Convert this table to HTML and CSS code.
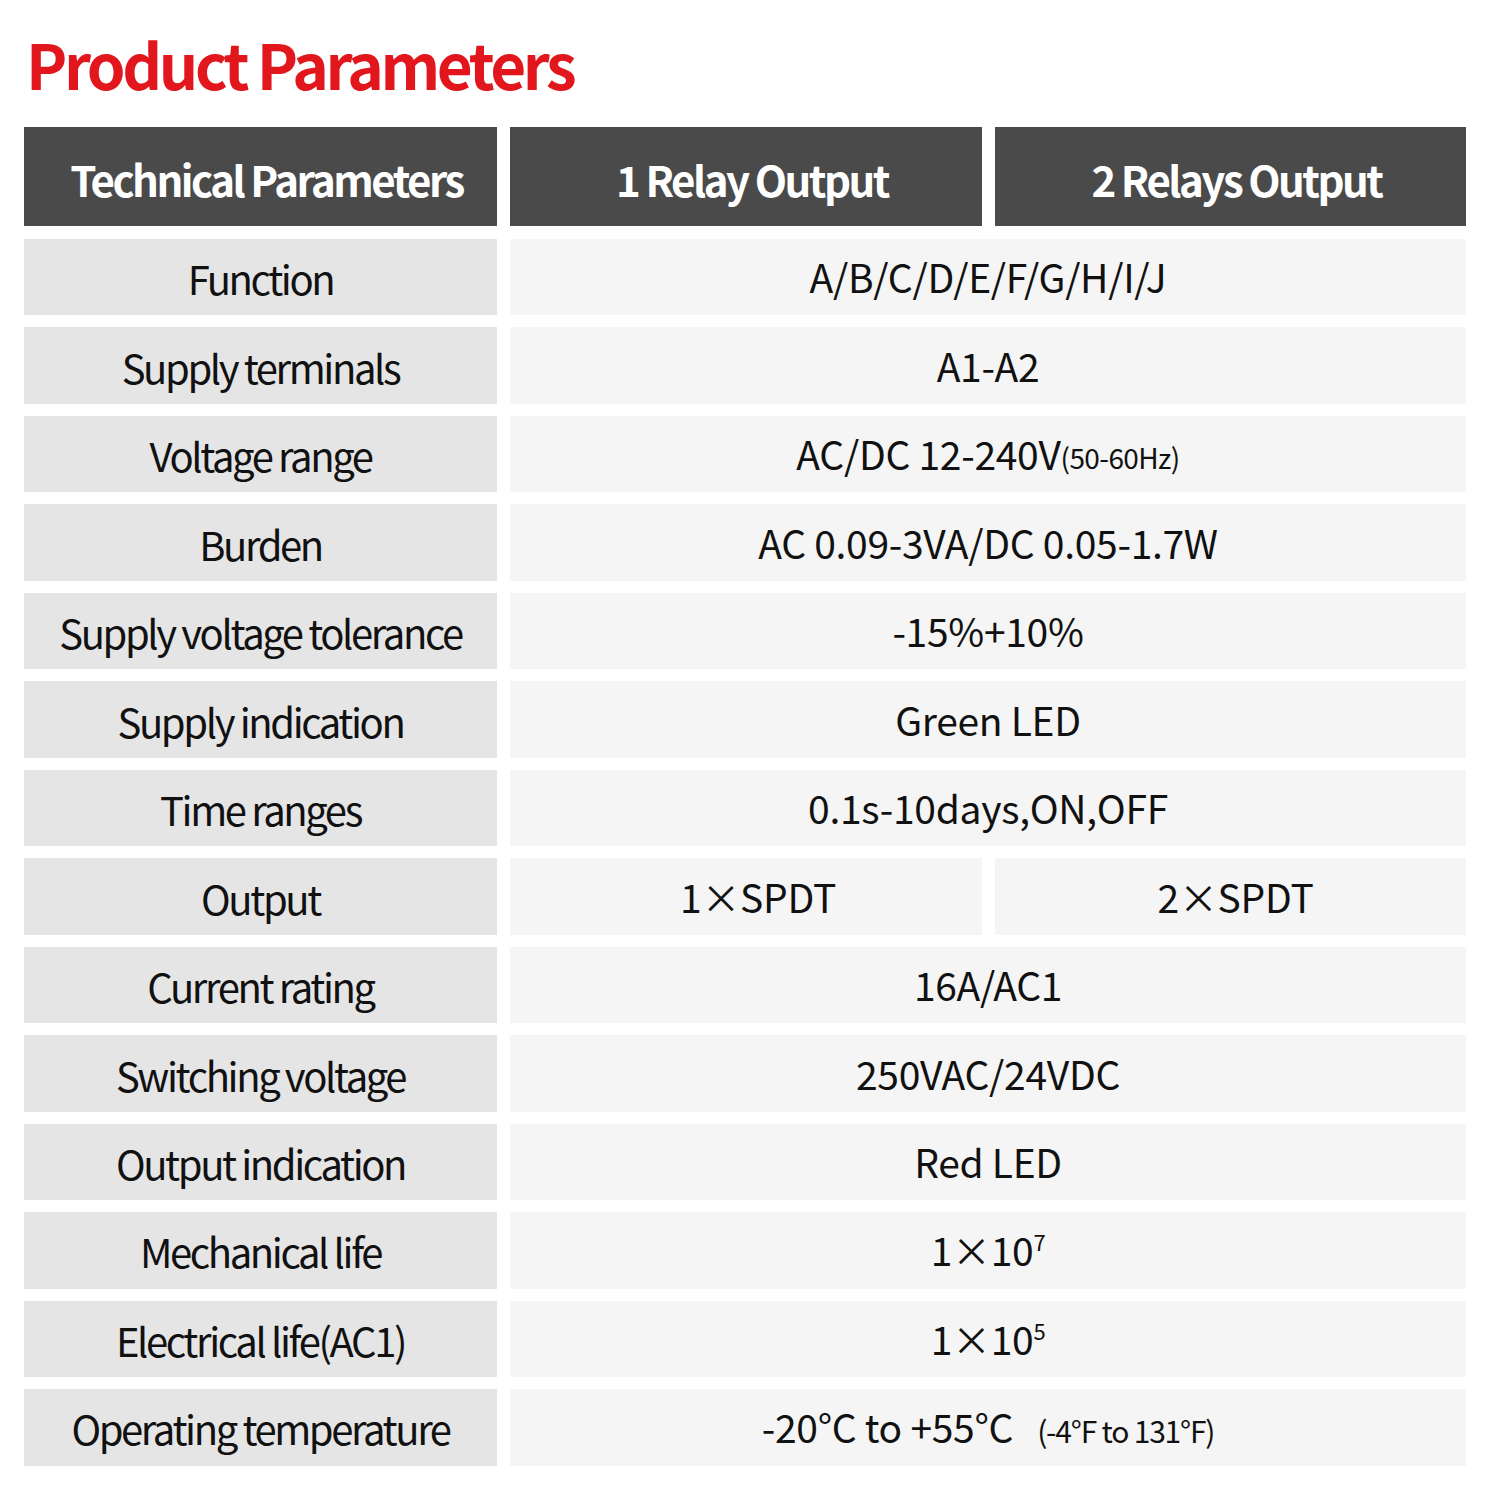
FILE: index.html
```html
<!DOCTYPE html>
<html lang="en">
<head>
<meta charset="utf-8">
<title>Product Parameters</title>
<link rel="stylesheet" href="styles.css">
</head>
<body>
<div class="page">
  <h1 class="title">Product Parameters</h1>
  <div class="table">
    <div class="head">Technical Parameters</div>
    <div class="head">1 Relay Output</div>
    <div class="head">2 Relays Output</div>

    <div class="label">Function</div>
    <div class="value span">A/B/C/D/E/F/G/H/I/J</div>

    <div class="label">Supply terminals</div>
    <div class="value span">A1-A2</div>

    <div class="label">Voltage range</div>
    <div class="value span">AC/DC 12-240V<span class="small">(50-60Hz)</span></div>

    <div class="label">Burden</div>
    <div class="value span">AC 0.09-3VA/DC 0.05-1.7W</div>

    <div class="label">Supply voltage tolerance</div>
    <div class="value span">-15%+10%</div>

    <div class="label">Supply indication</div>
    <div class="value span">Green LED</div>

    <div class="label">Time ranges</div>
    <div class="value span">0.1s-10days,ON,OFF</div>

    <div class="label">Output</div>
    <div class="value shift-1">1×SPDT</div>
    <div class="value shift-2">2×SPDT</div>

    <div class="label">Current rating</div>
    <div class="value span">16A/AC1</div>

    <div class="label">Switching voltage</div>
    <div class="value span">250VAC/24VDC</div>

    <div class="label">Output indication</div>
    <div class="value span">Red LED</div>

    <div class="label">Mechanical life</div>
    <div class="value span">1×10<sup class="sup">7</sup></div>

    <div class="label">Electrical life(AC1)</div>
    <div class="value span">1×10<sup class="sup">5</sup></div>

    <div class="label">Operating temperature</div>
    <div class="value span">-20°C to +55°C<span class="small temp">(-4°F to 131°F)</span></div>
  </div>
</div>
</body>
</html>
```

FILE: styles.css
```css
html, body {
  margin: 0;
  padding: 0;
  background: #ffffff;
}

.page {
  width: 1500px;
  padding: 24px 34px 0 24px;
  box-sizing: border-box;
  font-family: "Noto Sans CJK SC", "Noto Sans", sans-serif;
  color: #111111;
}

.title {
  margin: 0 0 0 2px;
  height: 103px;
  font-size: 62px;
  font-weight: 700;
  line-height: 78px;
  letter-spacing: -3.4px;
  color: #e2161d;
}

.table {
  display: grid;
  grid-template-columns: 473px 472px 471px;
  grid-template-rows: 100px repeat(14, 76.7px);
  column-gap: 13px;
  row-gap: 11.8px;
}

.table .head:nth-child(-n+3) {
  margin-bottom: 1px;
}

.head {
  background: #4a4a4a;
  color: #ffffff;
  font-size: 42px;
  font-weight: 700;
  letter-spacing: -2.5px;
  display: flex;
  align-items: center;
  justify-content: center;
  padding-top: 4px;
  padding-left: 12px;
}

.label {
  background: #e6e5e6;
  font-size: 40px;
  letter-spacing: -2.4px;
  display: flex;
  align-items: center;
  justify-content: center;
  padding-top: 2px;
}

.value {
  background: #f5f5f5;
  font-size: 39px;
  letter-spacing: -0.3px;
  display: flex;
  align-items: center;
  justify-content: center;
  padding-bottom: 2px;
}

.span {
  grid-column: 2 / 4;
}

.shift-1 {
  padding-left: 24px;
}

.shift-2 {
  padding-left: 10px;
}

.small {
  font-size: 28px;
  letter-spacing: -0.6px;
  align-self: center;
  margin-top: 8px;
}

.temp {
  font-size: 30px;
  margin-left: 24px;
  letter-spacing: -1.2px;
}

.sup {
  font-size: 22px;
  align-self: flex-start;
  margin-top: 18px;
  line-height: 1;
}
```
